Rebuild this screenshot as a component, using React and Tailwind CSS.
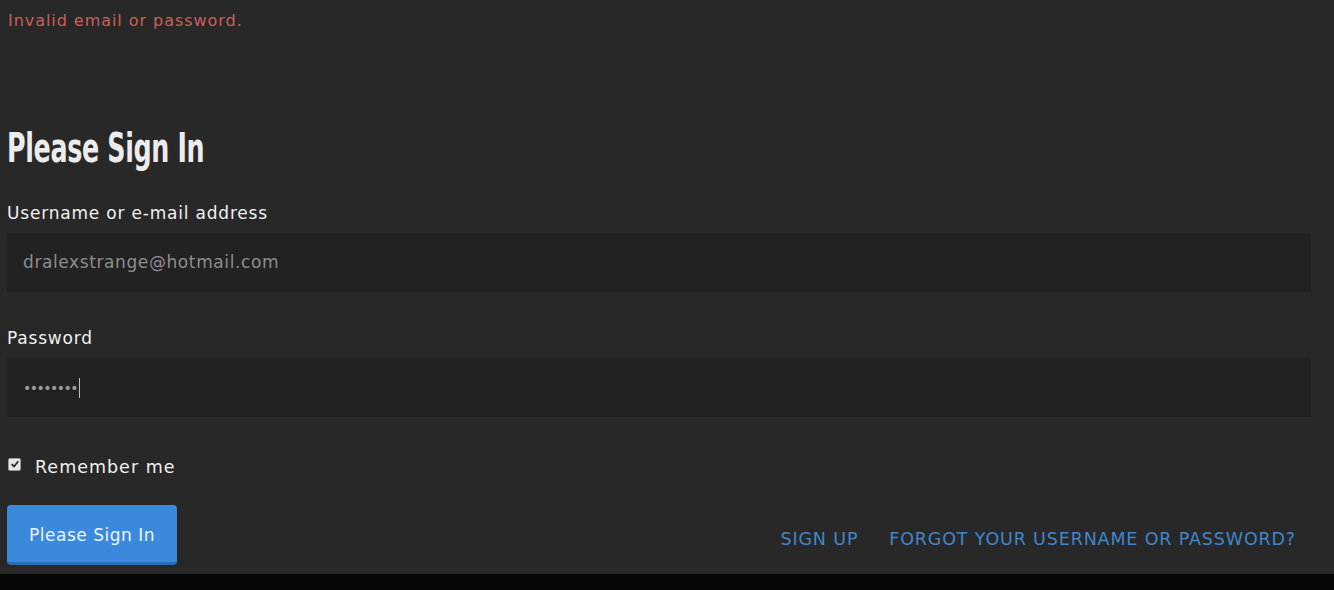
import React from "react";

const sans = { fontFamily: '"DejaVu Sans", "Noto Sans", sans-serif' };

export default function App() {
  return (
    <div className="w-[1334px] h-[590px] flex flex-col bg-[#050505]" style={sans}>
      <div className="h-[574px] bg-[#282828] px-[7px] flex flex-col">
        {/* error */}
        <p className="mt-[10px] text-[16px] leading-[22px] text-[#c9605a] pl-[1px] tracking-[0.95px]">
          Invalid email or password.
        </p>

        {/* heading */}
        <h1
          className="mt-[94px] h-[44px] text-[40px] leading-[44px] font-bold text-[#ececec] origin-left scale-x-[0.705] whitespace-nowrap tracking-[-0.5px]"
          style={{ fontFamily: '"DejaVu Sans Condensed", "DejaVu Sans", sans-serif' }}
        >
          Please Sign In
        </h1>

        <form className="mt-[32px] flex flex-col" onSubmit={(e) => e.preventDefault()}>
          <label className="text-[17px] leading-[22px] text-[#f0f0f0] tracking-[0.8px]">Username or e-mail address</label>
          <div className="mt-[9px] h-[59px] w-[1304px] bg-[#222222] flex items-center pl-[16px] text-[17px] text-[#8e8e8e] tracking-[0.6px]">
            dralexstrange@hotmail.com
          </div>

          <label className="mt-[35px] text-[17px] leading-[22px] text-[#f0f0f0] tracking-[0.8px]">Password</label>
          <div className="mt-[9px] h-[59px] w-[1304px] bg-[#222222] flex items-center pl-[16px]">
            <span className="text-[#9a9a9a] text-[14px] tracking-[-1.5px] leading-none">••••••••</span>
            <span className="ml-[2px] w-[1px] h-[20px] bg-[#bdbdbd]" />
          </div>

          <div className="mt-[39px] flex items-center">
            <span className="ml-[1px] -mt-[6px] w-[13px] h-[13px] rounded-[2px] bg-[#e6e6e6] border border-[#9a9a9a] flex items-center justify-center">
              <svg viewBox="0 0 12 12" className="w-[10px] h-[10px]">
                <path d="M2 6.2 L4.8 9 L10 2.8" stroke="#222" strokeWidth="2" fill="none" />
              </svg>
            </span>
            <span className="ml-[14px] text-[17.5px] leading-[22px] text-[#f0f0f0] tracking-[1px]">Remember me</span>
          </div>

          <div className="mt-[27px] flex items-center justify-between">
            <button className="w-[170px] h-[60px] pt-[4px] rounded-[4px] bg-[#3b89dd] border-b-[3px] border-[#2b6db5] text-[17px] text-[#eef4fb] tracking-[0.5px]">
              Please Sign In
            </button>
            <div className="mt-[8px] flex items-center gap-[31px] mr-[31px] text-[17.5px] text-[#3f86cc] uppercase tracking-[0.85px]">
              <a>Sign up</a>
              <a>Forgot your username or password?</a>
            </div>
          </div>
        </form>
      </div>
    </div>
  );
}
